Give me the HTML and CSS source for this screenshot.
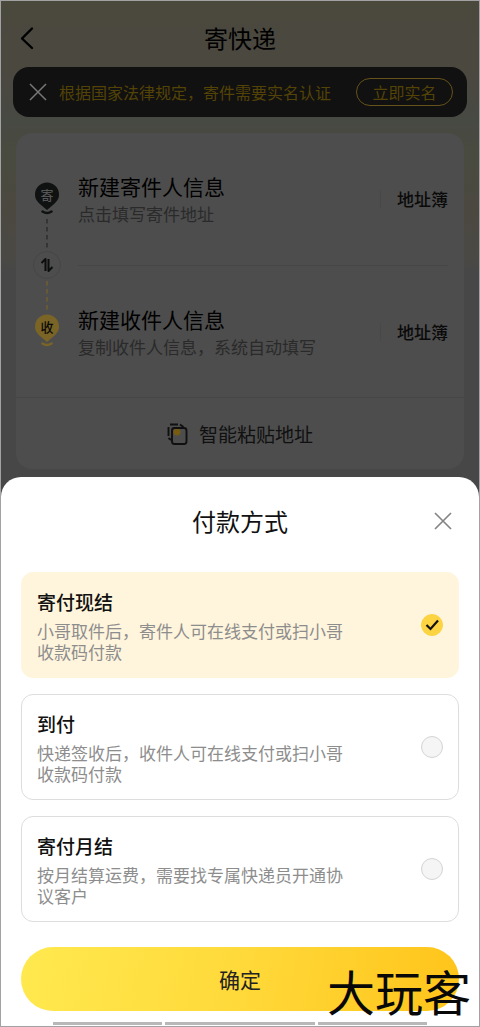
FILE: index.html
```html
<!DOCTYPE html>
<html lang="zh-CN">
<head>
<meta charset="utf-8">
<meta name="viewport" content="width=device-width, initial-scale=1">
<title>寄快递</title>
<link rel="stylesheet" href="styles.css">
</head>
<body>
<div class="app">
  <div class="page">
    <header class="topbar">
      <button class="icon-btn" type="button" aria-label="返回">
        <svg width="14" height="24" viewBox="0 0 14 24" fill="none" stroke="#000" stroke-width="2.4" stroke-linecap="round" stroke-linejoin="round"><path d="M12 2.5 2 12.5 12 22"/></svg>
      </button>
      <h1 class="topbar-title">寄快递</h1>
    </header>

    <div class="notice">
      <button class="icon-btn" type="button" aria-label="关闭提示">
        <svg width="18" height="18" viewBox="0 0 18 18" fill="none" stroke="#777" stroke-width="1.5"><path d="M1 1 17 17M17 1 1 17"/></svg>
      </button>
      <p class="notice-text">根据国家法律规定，寄件需要实名认证</p>
      <button class="verify" type="button">立即实名</button>
    </div>

    <section class="card">
      <div class="route">
        <div class="rail">
          <svg width="26" height="34" viewBox="0 0 26 34"><path d="M13 0.5a12 12 0 0 1 12 12c0 5-2.500 7-5.500 10L13 28 6.500 22.500C3.500 19.500 1 17.500 1 12.500a12 12 0 0 1 12-12Z" fill="#101111"/><path d="M8.500 29.500Q13 32.500 17.500 29.500" fill="none" stroke="#101111" stroke-width="2.500" stroke-linecap="round"/><text class="pin-text" x="13" y="18" fill="#555">寄</text></svg>
          <svg width="2" height="35" viewBox="0 0 2 35"><path d="M1 3V35" stroke="#292927" stroke-width="1.300" stroke-dasharray="4.500 3.500"/></svg>
          <button class="swap" type="button" aria-label="交换地址">
            <svg width="14" height="16" viewBox="0 0 14 16" fill="none" stroke="#0c0d0d" stroke-width="2" stroke-linejoin="round"><path d="M1.500 6 5.500 2V14M8.500 2V14L12.500 10"/></svg>
          </button>
          <svg width="2" height="35" viewBox="0 0 2 35"><path d="M1 2V33" stroke="#75602a" stroke-width="1.300" stroke-dasharray="4.500 3.500"/></svg>
          <svg width="26" height="34" viewBox="0 0 26 34"><path d="M13 0.5a12 12 0 0 1 12 12c0 5-2.500 7-5.500 10L13 28 6.500 22.500C3.500 19.500 1 17.500 1 12.500a12 12 0 0 1 12-12Z" fill="#7a6426"/><path d="M8.500 29.500Q13 32.500 17.500 29.500" fill="none" stroke="#7a6426" stroke-width="2.500" stroke-linecap="round"/><text class="pin-text" x="13" y="18" fill="#0a0a08">收</text></svg>
        </div>
        <div class="contacts">
          <div class="contact">
            <div class="contact-main">
              <h2 class="contact-name">新建寄件人信息</h2>
              <p class="contact-hint">点击填写寄件地址</p>
            </div>
            <button class="book" type="button">地址簿</button>
          </div>
          <div class="contact">
            <div class="contact-main">
              <h2 class="contact-name">新建收件人信息</h2>
              <p class="contact-hint">复制收件人信息，系统自动填写</p>
            </div>
            <button class="book" type="button">地址簿</button>
          </div>
        </div>
      </div>
      <button class="paste" type="button">
        <svg width="22" height="24" viewBox="0 0 22 24" fill="none" stroke="#101010" stroke-width="1.900"><circle cx="10" cy="10" r="3.500" fill="#755b12" stroke="none"/><rect x="5" y="6" width="14.500" height="16" rx="2.500"/><path d="M3 2.500H11M13 2.500 16.500 5M1.500 5V14M1.500 16 4 18"/></svg>
        <span>智能粘贴地址</span>
      </button>
    </section>
  </div>

  <form class="sheet">
    <div class="sheet-head">
      <h2 class="sheet-title">付款方式</h2>
      <button class="icon-btn" type="button" aria-label="关闭">
        <svg width="18" height="18" viewBox="0 0 18 18" fill="none" stroke="#858585" stroke-width="1.700"><path d="M1 1 17 17M17 1 1 17"/></svg>
      </button>
    </div>

    <div class="options">
      <label class="option">
        <span class="option-body">
          <span class="option-title">寄付现结</span>
          <span class="option-desc">小哥取件后，寄件人可在线支付或扫小哥收款码付款</span>
        </span>
        <span class="choice">
          <input class="radio" type="radio" name="pay" checked>
          <svg class="tick" width="22" height="22" viewBox="0 0 22 22" fill="none" stroke="#111" stroke-width="2.200"><path d="M5.500 11 9.500 15 17 6.500"/></svg>
        </span>
      </label>
      <label class="option">
        <span class="option-body">
          <span class="option-title">到付</span>
          <span class="option-desc">快递签收后，收件人可在线支付或扫小哥收款码付款</span>
        </span>
        <span class="choice">
          <input class="radio" type="radio" name="pay">
          <svg class="tick" width="22" height="22" viewBox="0 0 22 22" fill="none" stroke="#111" stroke-width="2.200"><path d="M5.500 11 9.500 15 17 6.500"/></svg>
        </span>
      </label>
      <label class="option">
        <span class="option-body">
          <span class="option-title">寄付月结</span>
          <span class="option-desc">按月结算运费，需要找专属快递员开通协议客户</span>
        </span>
        <span class="choice">
          <input class="radio" type="radio" name="pay">
          <svg class="tick" width="22" height="22" viewBox="0 0 22 22" fill="none" stroke="#111" stroke-width="2.200"><path d="M5.500 11 9.500 15 17 6.500"/></svg>
        </span>
      </label>
    </div>

    <button class="confirm" type="button">确定</button>
    <div class="navbar"><i></i><i></i><i></i></div>
    <span class="watermark">大玩客</span>
  </form>
</div>
</body>
</html>
```

FILE: styles.css
```css
* {
  box-sizing: border-box;
}

body {
  margin: 0;
  font-family: "Noto Sans CJK SC", "Noto Sans", sans-serif;
  color: #111;
}

h1, h2, p {
  margin: 0;
  font-weight: 400;
}

button {
  margin: 0;
  padding: 0;
  border: 0;
  background: none;
  font: inherit;
  color: inherit;
  cursor: pointer;
}

svg {
  display: block;
}

.app {
  border: 1px solid #a2a2a5;
  background: linear-gradient(#4a493c 0, #4b4840 45px, #4b4840 70px, #474943 120px, #494b40 150px, #4b4840 210px, #4a4944 255px, #474747 270px);
}

/* Dimmed page behind the sheet */
.page {
  padding: 0 15px 8px;
}

.topbar {
  display: grid;
  grid-template-columns: 24px 1fr 24px;
  align-items: center;
  height: 66px;
  padding: 8px 4px 0;
}

.topbar-title {
  font-size: 24px;
  line-height: 32px;
  text-align: center;
  color: #000;
}

.notice {
  display: flex;
  align-items: center;
  height: 50px;
  margin: 0 -3px 16px;
  padding: 0 14px 0 16px;
  border-radius: 16px;
  background: #111;
  color: #544307;
  font-size: 16px;
}

.notice-text {
  flex: 1;
  margin-left: 12px;
  white-space: nowrap;
}

.verify {
  width: 97px;
  height: 28px;
  border: 1px solid #66521b;
  border-radius: 14px;
  line-height: 24px;
}

.card {
  border-radius: 16px;
  background: #4d4d4d;
}

.route {
  display: flex;
  border-bottom: 1px solid #464646;
}

.rail {
  display: flex;
  flex-direction: column;
  align-items: center;
  width: 62px;
  padding-top: 49px;
}

.pin-text {
  font-size: 13px;
  font-weight: 500;
  text-anchor: middle;
}

.swap {
  display: grid;
  place-items: center;
  width: 28px;
  height: 28px;
  border: 1px solid #464646;
  border-radius: 50%;
}

.contacts {
  flex: 1;
  margin-right: 16px;
}

.contact {
  display: flex;
  align-items: center;
  height: 132px;
}

.contact + .contact {
  border-top: 1px solid #464646;
}

.contact-main {
  flex: 1;
}

.contact-name {
  color: #000;
  font-size: 21px;
  line-height: 30px;
}

.contact-hint {
  color: #2a2a2a;
  font-size: 17px;
  line-height: 26px;
}

.book {
  padding-left: 16px;
  border-left: 1px solid #484848;
  color: #0a0a0a;
  font-size: 17px;
  font-weight: 500;
  line-height: 18px;
}

.paste {
  display: flex;
  align-items: center;
  justify-content: center;
  gap: 10px;
  width: 100%;
  height: 71px;
  color: #101010;
  font-size: 19px;
}

/* Payment sheet */
.sheet {
  position: relative;
  padding: 0 20px;
  border-radius: 20px 20px 0 0;
  background: #fff;
}

.sheet-head {
  display: grid;
  grid-template-columns: 25px 1fr 25px;
  align-items: center;
  height: 95px;
  padding-bottom: 8px;
}

.sheet-title {
  grid-column: 2;
  font-size: 24px;
  line-height: 32px;
  text-align: center;
}

.options {
  display: grid;
  gap: 16px;
}

.option {
  display: flex;
  align-items: center;
  justify-content: space-between;
  padding: 15px;
  border: 1px solid #ddd;
  border-radius: 12px;
  cursor: pointer;
}

.option:has(:checked) {
  border-color: #fff4dc;
  background: #fff4dc;
}

.option-body {
  display: grid;
  gap: 4px;
  max-width: 316px;
}

.option-title {
  font-size: 19px;
  font-weight: 500;
  line-height: 28px;
}

.option-desc {
  color: #8d8d8d;
  font-size: 17px;
  line-height: 21px;
}

.choice {
  display: grid;
}

.radio {
  grid-area: 1 / 1;
  appearance: none;
  width: 22px;
  height: 22px;
  margin: 0;
  border: 1px solid #d4d4d4;
  border-radius: 50%;
  background: #f5f5f5;
}

.radio:checked {
  border-color: #fcd340;
  background: #fcd340;
}

.tick {
  grid-area: 1 / 1;
  visibility: hidden;
  pointer-events: none;
}

.radio:checked + .tick {
  visibility: visible;
}

.confirm {
  display: block;
  width: 100%;
  height: 64px;
  margin: 25px 0 11px;
  border-radius: 32px;
  background: linear-gradient(100deg, #ffe94f, #ffd93a 50%, #ffc41a);
  color: #222;
  font-size: 21px;
}

.navbar {
  display: grid;
  grid-template-columns: 109px 150px 109px;
  justify-content: center;
  gap: 3px;
  height: 4px;
}

.navbar i {
  height: 3px;
  background: #b8b8b8;
}

.watermark {
  position: absolute;
  right: 8px;
  bottom: 12px;
  color: #080808;
  font-size: 48px;
  line-height: 48px;
  pointer-events: none;
}
```
